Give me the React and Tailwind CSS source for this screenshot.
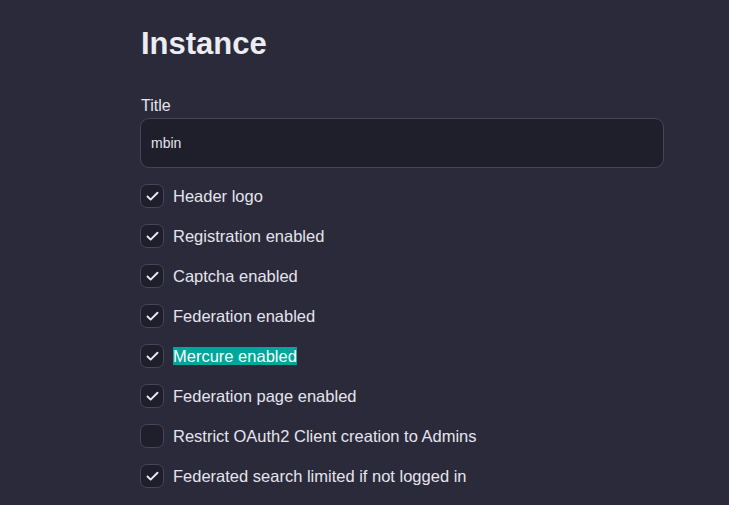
import { Check } from 'lucide-react';

const options = [
  { label: 'Header logo', checked: true },
  { label: 'Registration enabled', checked: true },
  { label: 'Captcha enabled', checked: true },
  { label: 'Federation enabled', checked: true },
  { label: 'Mercure enabled', checked: true, selected: true },
  { label: 'Federation page enabled', checked: true },
  { label: 'Restrict OAuth2 Client creation to Admins', checked: false },
  { label: 'Federated search limited if not logged in', checked: true },
];

function Checkbox({ checked }) {
  return (
    <div className="w-6 h-6 rounded-[7px] border border-[#45445a] bg-[#1f1e2b] flex items-center justify-center shrink-0">
      {checked && <Check className="w-[15px] h-[15px] text-[#ececf4]" strokeWidth={3} />}
    </div>
  );
}

export default function App() {
  return (
    <div
      className="min-h-[505px] bg-[#2b2a3b] text-[#e4e4ec] pl-[140px] pt-[26px]"
      style={{ fontFamily: '"Liberation Sans", Arial, sans-serif' }}
    >
      <div className="w-[524px]">
        <h1 className="text-[31px] font-bold leading-[36px] text-[#ececf2] pl-[1px]">Instance</h1>

        <label className="block mt-[34px] text-[16px] leading-[20px] pl-[1px]">Title</label>
        <div className="mt-[2px] h-[50px] rounded-[9px] border border-[#45445a] bg-[#1f1e2b] flex items-center px-[10px] text-[14px]">
          mbin
        </div>

        <div className="mt-[8px] flex flex-col">
          {options.map((opt) => (
            <div key={opt.label} className="h-10 flex items-center gap-[9px]">
              <Checkbox checked={opt.checked} />
              <span className="text-[16.5px] leading-[20px]">
                <span className={opt.selected ? 'bg-[#00a59c] text-white' : ''}>{opt.label}</span>
              </span>
            </div>
          ))}
        </div>
      </div>
    </div>
  );
}
